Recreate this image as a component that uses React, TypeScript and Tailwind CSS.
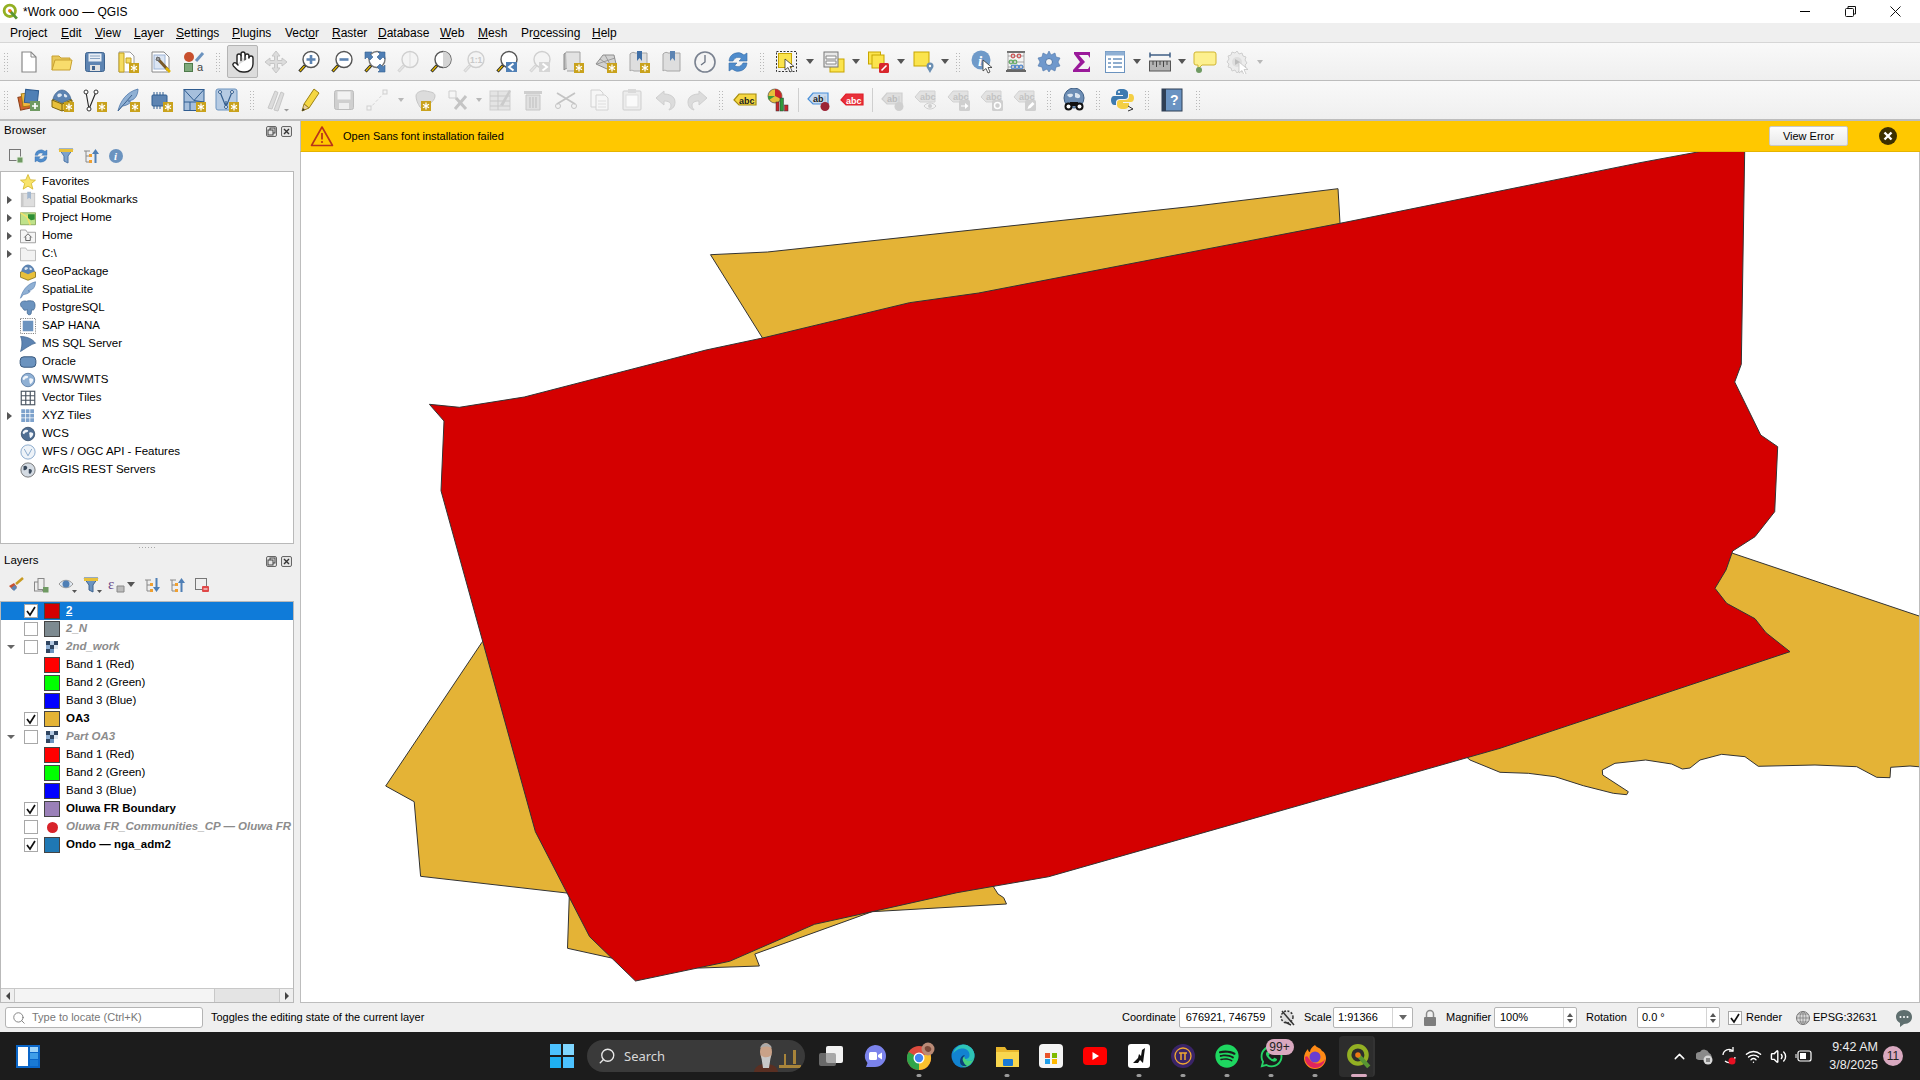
import React from "react";
import { Hand, Search, ChevronUp, Volume2, Wifi } from "lucide-react";
import { FaSpotify, FaWhatsapp } from "react-icons/fa";

const Ico = ({ children, size = 24 }: { children: React.ReactNode; size?: number }) => (
  <svg width={size} height={size} viewBox="0 0 24 24" className="shrink-0">
    {children}
  </svg>
);

const Star = ({ x = 13, y = 13 }: { x?: number; y?: number }) => (
  <g>
    <rect x={x} y={y} width="10" height="10" fill="#c9a21c" />
    <path
      d={`M${x + 5} ${y + 1.5}v7M${x + 2} ${y + 3.2}l6 3.6M${x + 8} ${y + 3.2}l-6 3.6`}
      stroke="#fff"
      strokeWidth="1.3"
    />
  </g>
);

const Mag = ({ tint = "#fff", stroke = "#555", grip = "#e0b400", children, off }: {
  tint?: string; stroke?: string; grip?: string; children?: React.ReactNode; off?: boolean;
}) => (
  <>
    <circle cx="14" cy="9.5" r="8" fill={off ? "#f4f4f4" : tint} stroke={off ? "#cfcfcf" : stroke} strokeWidth="1.4" />
    <path d="M8 15.5L2.5 21.5" stroke={off ? "#d2d2d2" : "#222"} strokeWidth="3.2" />
    <path d="M7.5 16L3 21" stroke={off ? "#e4e4e4" : grip} strokeWidth="1.4" />
    {children}
  </>
);

const Globe = ({ fill = "#8fb0d4", dark = "#4c6f99" }: { fill?: string; dark?: string }) => (
  <>
    <circle cx="12" cy="12" r="9" fill={fill} stroke={dark} strokeWidth="1" />
    <path d="M6 8c2-2 5-2 6-1s-1 3-3 3-1 3-3 2-1-3 0-4zM14 10c2-1 5 0 5 2s-2 4-3 5-2-1-2-3-1-3 0-4z" fill="#f1f5fa" />
  </>
);

const Gray = "#cfcfcf";
const GrayD = "#bdbdbd";

const NewIcon = () => <Ico><path d="M5 2h9l5 5v15H5z" fill="#fff" stroke="#888" strokeWidth="1.2" /><path d="M14 2v5h5" fill="none" stroke="#888" /></Ico>;
const OpenIcon = () => <Ico><path d="M2 20V6h7l2 2h9v3" fill="#e8c85a" stroke="#c8a030" /><path d="M2 20l3-10h17l-2 10z" fill="#f8dc6c" stroke="#c8a030" /></Ico>;
const SaveIcon = () => <Ico><rect x="2.5" y="2.5" width="19" height="19" rx="2" fill="#5d84b2" stroke="#3f648f" /><rect x="5.5" y="3.5" width="13" height="8" fill="#e8eef5" /><path d="M7 6h10M7 8.5h10" stroke="#8aa4c2" /><rect x="7" y="15" width="10" height="6" fill="#e2e2e2" /><rect x="9" y="16" width="3" height="4" fill="#3f648f" /></Ico>;
const NewLayoutIcon = () => <Ico><path d="M3 2h11l4 4v16H3z" fill="#fff" stroke="#999" /><path d="M3 3h5v19H3z" fill="#f5dc60" stroke="#c2a020" /><path d="M10 8h5v5h-5z" fill="#f5dc60" stroke="#c2a020" /><Star /></Ico>;
const LayoutMgrIcon = () => <Ico><path d="M3 2h12l5 5v15H3z" fill="#fff" stroke="#888" /><rect x="5" y="5" width="11" height="14" fill="#dbe5f3" stroke="#9db4d6" /><path d="M9 9l10 11" stroke="#7b5b2a" strokeWidth="3" /><path d="M8 7l3 1-1 3-3-1z" fill="#9a9a9a" stroke="#666" /><path d="M17 18l4 4" stroke="#e0b400" strokeWidth="2.5" /></Ico>;
const StyleIcon = () => <Ico><circle cx="7" cy="7" r="5" fill="#c8502e" /><path d="M14 11l7-8" stroke="#6b93bf" strokeWidth="3" /><rect x="2.5" y="13.5" width="8" height="8" fill="#7ea97a" stroke="#4e7a4a" /><text x="15" y="21" fontSize="11" fill="#444" fontFamily="Liberation Sans">a</text></Ico>;
const PanSelIcon = () => <Ico><path d="M12 1l4 5h-2.500v4.500H18V8l5 4-5 4v-2.500h-4.500V18H16l-4 5-4-5h2.500v-4.500H6V16l-5-4 5-4v2.500h4.500V6H8z" fill="#dcdcdc" stroke="#c6c6c6" /></Ico>;
const ZoomInIcon = () => <Ico><Mag tint="#fff"><path d="M14 5v9M9.500 9.500h9" stroke="#5d84b2" strokeWidth="2.600" /></Mag></Ico>;
const ZoomOutIcon = () => <Ico><Mag tint="#fff"><path d="M9.500 9.500h9" stroke="#5d84b2" strokeWidth="2.600" /></Mag></Ico>;
const ZoomFullIcon = () => <Ico><Mag tint="#fff" stroke="#777" /><path d="M2 2h7l-2 2 3 3-3 3-3-3-2 2zM22 2v7l-2-2-3 3-3-3 3-3-2-2zM22 22h-7l2-2-3-3 3-3 3 3 2-2z" fill="#4f7fb5" stroke="#345e8e" strokeWidth=".6" /></Ico>;
const ZoomSelIcon = () => <Ico><Mag off><path d="M14 2v15" stroke="#ddd" /></Mag></Ico>;
const ZoomLayerIcon = () => <Ico><Mag tint="#fff" stroke="#555"><path d="M14 1.500v16a8 8 0 0 0 0-16z" fill="#d4d4d4" /></Mag></Ico>;
const ZoomNativeIcon = () => <Ico><Mag off><text x="8" y="13" fontSize="8.500" fontWeight="700" fill="#c9c9c9" fontFamily="Liberation Sans">1:1</text></Mag></Ico>;
const ZoomLastIcon = () => <Ico><Mag tint="#fff" stroke="#555" /><rect x="11" y="12" width="11" height="10" fill="#4f7fb5" /><path d="M18.500 13.500L14 17l4.500 3.500" stroke="#fff" strokeWidth="2" fill="none" /></Ico>;
const ZoomNextIcon = () => <Ico><Mag off /><rect x="11" y="12" width="11" height="10" fill="#d6d6d6" /><path d="M14.500 13.500L19 17l-4.500 3.500" stroke="#fff" strokeWidth="2" fill="none" /></Ico>;
const NewMapIcon = () => <Ico><path d="M3 4c2-2 5-2 5 0v16c0-2-3-2-5 0z" fill="#bbb" stroke="#888" /><path d="M5 2h14v19H6" fill="#e2e2e2" stroke="#a2a2a2" /><Star /></Ico>;
const New3dIcon = () => <Ico><path d="M2 14L9 5h11l2 9-9 5z" fill="#d2d2d2" stroke="#8e8e8e" /><path d="M6 9l10 7M11 5l6 11M3 14l18-6" stroke="#8e8e8e" strokeWidth=".8" /><Star /></Ico>;
const BookmarkIcon = ({ off, star }: { off?: boolean; star?: boolean }) => <Ico><path d="M3 4c2-2 4-2 5-1h12v18H7c-2-1-3-1-4 0z" fill={off ? "#e8e8e8" : "#dedede"} stroke="#a6a6a6" /><path d="M10 1h5v10l-2.500-3-2.500 3z" fill={star ? "#3f6fa6" : "#5d84b2"} />{star && <Star />}</Ico>;
const ClockIcon = () => <Ico><circle cx="12" cy="12" r="10" fill="#f4f4f4" stroke="#7a8290" strokeWidth="1.600" /><path d="M12 5v7l-4 3" stroke="#6a7280" strokeWidth="1.300" fill="none" /></Ico>;
const RefreshIcon = ({ size = 24 }: { size?: number }) => <Ico size={size}><path d="M3 11a9 9 0 0 1 15-6l3-2v8h-8l2.500-2.500A5.500 5.500 0 0 0 7 11z" fill="#4f8ccc" stroke="#386da6" strokeWidth=".6" /><path d="M21 13a9 9 0 0 1-15 6l-3 2v-8h8l-2.500 2.500A5.500 5.500 0 0 0 17 13z" fill="#4f8ccc" stroke="#386da6" strokeWidth=".6" /></Ico>;
const Pointer = ({ x = 10, y = 9 }: { x?: number; y?: number }) => <path transform={`translate(${x} ${y})`} d="M0 0l0 11 3-2.500 2 4.500 2-1-2-4.500h4z" fill="#fff" stroke="#333" strokeWidth=".8" />;
const SelectIcon = () => <Ico><rect x="1.500" y="1.500" width="20" height="20" fill="none" stroke="#333" strokeDasharray="2 1.500" /><rect x="3.500" y="3.500" width="13" height="14" fill="#fbe44d" stroke="#c8a500" /><Pointer /></Ico>;
const SelFormIcon = () => <Ico><rect x="8" y="9" width="14" height="13" fill="#fbe44d" stroke="#c8a500" /><rect x="2" y="2" width="14" height="15" fill="#e8e8e8" stroke="#777" /><path d="M4 6h10v3H4zM4 11h10v3H4z" fill="#fff" stroke="#888" /></Ico>;
const DeselIcon = () => <Ico><rect x="1.500" y="2" width="12" height="12" fill="#fbe44d" stroke="#c8a500" /><rect x="5" y="5" width="12" height="13" fill="#fbe44d" stroke="#c8a500" /><rect x="12" y="13" width="10" height="10" rx="1.500" fill="#d8262c" /><path d="M14.500 20.500l5-5" stroke="#fff" strokeWidth="1.600" /></Ico>;
const SelLocIcon = () => <Ico><rect x="2" y="2" width="15" height="14" fill="#fbe44d" stroke="#c8a500" /><path d="M18 23c-2-4-3.500-5-3.500-7a3.500 3.500 0 0 1 7 0c0 2-1.500 3-3.500 7z" fill="#6b8fb3" /><circle cx="18" cy="16" r="1.200" fill="#fff" /></Ico>;
const IdentifyIcon = () => <Ico><circle cx="10" cy="10" r="9.500" fill="#6f9ac9" /><text x="7" y="16" fontSize="15" fontStyle="italic" fontWeight="700" fill="#fff" fontFamily="Liberation Serif">i</text><Pointer x={12} y={10} /></Ico>;
const AbacusIcon = () => <Ico><path d="M3 2h18M3 20h18" stroke="#444" strokeWidth="1.600" /><rect x="2" y="20" width="20" height="2" fill="#666" /><path d="M4 2v18M20 2v18M4 6h16M4 12h16M4 17h16" stroke="#888" strokeWidth=".7" /><g fill="none" strokeWidth="1.200"><circle cx="9" cy="6" r="1.800" stroke="#c55" /><circle cx="15" cy="6" r="1.800" stroke="#c55" /><circle cx="7" cy="12" r="1.800" stroke="#6a6" /><circle cx="11" cy="12" r="1.800" stroke="#6a6" /><circle cx="9" cy="17" r="1.800" stroke="#58c" /><circle cx="13" cy="17" r="1.800" stroke="#58c" /><circle cx="17" cy="17" r="1.800" stroke="#58c" /></g></Ico>;
const GearIcon = () => <Ico><path d="M12 1l2 4 4-2 1 4 4 1-2 4 2 4-4 1-1 4-4-2-2 3-2-3-4 2-1-4-4-1 2-4-2-4 4-1 1-4 4 2z" fill="#6f98cc" stroke="#4d76a9" strokeWidth=".6" /><circle cx="12" cy="12" r="3.500" fill="#f2f2f2" stroke="#4d76a9" /></Ico>;
const SigmaIcon = () => <Ico><path d="M4 2h16v6l-2-3H9l6 7-7 7h10l2-3v6H3v-2l7-8-6-8z" fill="#9a1a9a" /></Ico>;
const TableIcon = () => <Ico><rect x="2.500" y="1.500" width="19" height="21" fill="#fff" stroke="#6b93bf" /><rect x="2.500" y="1.500" width="19" height="4" fill="#8fb0d4" /><path d="M5 9h3M10 9h9M5 13h3M10 13h9M5 17h3M10 17h9" stroke="#6b93bf" strokeWidth="1.500" /></Ico>;
const MeasureIcon = () => <Ico><path d="M2 5h20M2 2.500v5M22 2.500v5" stroke="#3f5f85" strokeWidth="1.500" /><rect x="1.500" y="11" width="21" height="10" fill="#b4b4b4" stroke="#555" /><path d="M5 11v4M8.500 11v6M12 11v4M15.500 11v6M19 11v4" stroke="#444" /></Ico>;
const TipIcon = () => <Ico><path d="M3 2h18a2 2 0 0 1 2 2v9a2 2 0 0 1-2 2H9l-4 4v-4H3a2 2 0 0 1-2-2V4a2 2 0 0 1 2-2z" fill="#fdf08e" stroke="#d0b530" /><circle cx="6" cy="20" r="3" fill="#6f9a62" /></Ico>;
const GearOffIcon = () => <Ico><path d="M11 1l2 3 3-1 1 3 3 1-1 3 2 3-2 2 1 3-3 1-1 3-3-1-2 2-2-3-3 1-1-3-3-1 1-3-2-2 2-3-1-3 3-1 1-3 3 1z" fill="#ececec" stroke="#cfcfcf" /><circle cx="11" cy="12" r="5" fill="#dedede" /><path d="M9 9l5 3-5 3z" fill="#bcbcbc" /><path transform="translate(13 12)" d="M0 0l0 11 3-2.500 2 4.500 2-1-2-4.500h4z" fill="#fff" stroke="#c4c4c4" strokeWidth=".8" /></Ico>;

const DsMgrIcon = () => <Ico><rect x="2" y="8" width="12" height="13" transform="rotate(-12 8 14)" fill="#d2632d" stroke="#8a3f17" /><rect x="5" y="5" width="12" height="13" transform="rotate(-8 11 11)" fill="#f0b840" stroke="#a67a10" /><rect x="8" y="2" width="13" height="13" transform="rotate(6 14 8)" fill="#4f7fb5" stroke="#2f5c90" /><rect x="13" y="13" width="10" height="10" fill="#6f9a62" /><path d="M18 15v6M15 18h6" stroke="#fff" strokeWidth="1.700" /></Ico>;
const GpkgIcon = () => <Ico><path d="M12 9l10 3v7l-10 4-10-4v-7z" fill="#e8c03a" stroke="#7a6510" /><path d="M2 12l10 4 10-4M12 16v7" fill="none" stroke="#7a6510" /><path d="M3 11c1-5 5-9 9-9s8 4 9 9l-9 4z" fill="#5d84b2" stroke="#375d88" strokeWidth=".6" /><path d="M8 6c2-1 4 0 4 1s-3 3-4 2-1-2 0-3zM14 6c2 0 4 2 3 3s-3 0-3-1z" fill="#dfe8f2" /><Star x={14} y={14} /></Ico>;
const TopoIcon = () => <Ico><path d="M3 4l3 17M13 4L6 21" stroke="#222" strokeWidth="1.100" fill="none" /><circle cx="3" cy="4" r="2" fill="#fff" stroke="#333" /><circle cx="13" cy="4" r="2" fill="#fff" stroke="#333" /><circle cx="6" cy="21" r="2" fill="#fff" stroke="#333" /><Star x={14} y={14} /></Ico>;
const FeatherIcon = () => <Ico><path d="M2 23C4 14 10 4 22 1c0 6-3 10-6 11l-4 1 3 1c-3 3-7 4-9 4z" fill="#8fb0d4" stroke="#4d76a9" strokeWidth=".8" /><path d="M2 23L16 7" stroke="#3f648f" /><Star x={14} y={14} /></Ico>;
const ChipIcon = () => <Ico><rect x="3" y="7" width="15" height="11" rx="1" fill="#5d84b2" stroke="#2f5c90" /><path d="M5 4v3M8 4v3M11 4v3M14 4v3M5 18v3M8 18v3M11 18v3" stroke="#2f5c90" /><Star x={14} y={14} /></Ico>;
const MeshIcon = () => <Ico><rect x="2" y="1.500" width="20" height="21" fill="#a6bfdc" stroke="#2f5c90" /><path d="M2 14h20M8 14v8.500M2 1.500l10 11 10-11M12 12.500l10 1.500" stroke="#2f5c90" fill="none" /><Star x={14} y={14} /></Ico>;
const VmeshIcon = () => <Ico><rect x="1" y="1" width="21" height="21" rx="2" fill="#b6cbe3" stroke="#6b93bf" /><path d="M5 4l6 15 6-15M11 19V13" fill="none" stroke="#345e8e" strokeWidth="1.200" /><circle cx="5" cy="4" r="1.500" fill="#fff" stroke="#345e8e" /><circle cx="17" cy="4" r="1.500" fill="#fff" stroke="#345e8e" /><circle cx="11" cy="19" r="1.500" fill="#fff" stroke="#345e8e" /><Star x={14} y={14} /></Ico>;
const PencilsOff = () => <Ico><path d="M2 20L9 3l3 1.500L6 21zM8 22L15 4l3 1.500L12 23z" fill="#dcdcdc" stroke="#c6c6c6" /><path d="M18 21h5l-2.500 2.500z" fill="#9a9a9a" /></Ico>;
const PencilIcon = () => <Ico><path d="M5 16L15 1l5 4L10 20z" fill="#f5d742" stroke="#9b8113" /><path d="M5 16l-2 7 7-3z" fill="#e8cfa0" stroke="#9b8113" /><path d="M3 23l1-3 2 2z" fill="#333" /></Ico>;
const SaveOff = () => <Ico><rect x="2.500" y="2.500" width="19" height="19" rx="2" fill={Gray} stroke={GrayD} /><rect x="5.500" y="3.500" width="13" height="8" fill="#f2f2f2" /><rect x="7" y="15" width="10" height="6" fill="#eee" /></Ico>;
const NodeOff = () => <Ico><path d="M4 21L20 4" stroke="#d4d4d4" strokeDasharray="3 2" /><rect x="2" y="18" width="4" height="4" fill="#f4f4f4" stroke="#cfcfcf" /><rect x="18" y="2" width="4" height="4" fill="#f4f4f4" stroke="#cfcfcf" /></Ico>;
const BlobOff = () => <Ico><path d="M3 8c0-4 6-6 10-5s9 1 9 5-3 5-5 8-8 6-10 3-4-7-4-11z" fill="#dcdcdc" stroke="#c6c6c6" /><Star x={8} y={13} /></Ico>;
const ToolsOff = () => <Ico><path d="M3 3h7v7H3z" fill="none" stroke="#cdcdcd" /><path d="M10 10l10 11M20 8L9 21" stroke="#c4c4c4" strokeWidth="3" /></Ico>;
const RowsOff = () => <Ico><rect x="2" y="3" width="20" height="19" fill="#e4e4e4" stroke="#cfcfcf" /><path d="M2 8h20M2 13h20M2 18h20M10 3v19" stroke="#c8c8c8" /><path d="M12 17L21 2l2 1-8 15z" fill="#cbcbcb" /></Ico>;
const TrashOff = () => <Ico><rect x="3" y="3" width="18" height="3" fill="#cfcfcf" /><path d="M5 7h14v15H5z" fill="#e0e0e0" stroke="#c6c6c6" /><path d="M9 9v11M12 9v11M15 9v11" stroke="#bdbdbd" /></Ico>;
const CutOff = () => <Ico><path d="M3 5l18 11M21 5L3 16" stroke="#c4c4c4" strokeWidth="1.800" /><circle cx="4" cy="18" r="2.500" fill="none" stroke="#c4c4c4" /><circle cx="20" cy="18" r="2.500" fill="none" stroke="#c4c4c4" /></Ico>;
const CopyOff = () => <Ico><path d="M4 2h9l3 3v14H4z" fill="#f6f6f6" stroke="#d2d2d2" /><path d="M9 7h9l3 3v12H9z" fill="#f6f6f6" stroke="#d2d2d2" /><path d="M11 13h8M11 16h8M11 19h8" stroke="#dedede" /></Ico>;
const PasteOff = () => <Ico><rect x="3" y="3" width="18" height="19" rx="1" fill="#ececec" stroke="#cdcdcd" /><rect x="8" y="1" width="8" height="4" fill="#dadada" /><rect x="6" y="7" width="12" height="12" fill="#fafafa" stroke="#dedede" /></Ico>;
const UndoOff = ({ flip }: { flip?: boolean }) => <Ico><path transform={flip ? "matrix(-1 0 0 1 24 0)" : undefined} d="M11 3L3 10l8 7v-4c4 0 7 1 7 5 0 2-2 3-2 4 4-1 6-4 6-8 0-6-6-8-11-8z" fill="#dcdcdc" stroke="#cfcfcf" /></Ico>;
const AbcTag = ({ color, line, bg }: { color: string; line: string; bg: string }) => (
  <Ico>
    <path d="M1 12l5-6h17v11H6z" fill={color} stroke={line} strokeWidth="1.200" />
    <text x="6" y="15.500" fontSize="9" fontWeight="700" fill={bg} fontFamily="Liberation Sans">abc</text>
  </Ico>
);
const DiagramIcon = () => <Ico><circle cx="9" cy="8" r="7" fill="#e8c03a" stroke="#333" strokeWidth=".6" /><path d="M9 8V1a7 7 0 0 1 6 10z" fill="#c8262c" /><path d="M9 8L3 12a7 7 0 0 1-1-4z" fill="#3d9a3d" /><rect x="10" y="14" width="3" height="9" fill="#c8262c" stroke="#333" strokeWidth=".5" /><rect x="14" y="10" width="3.500" height="13" fill="#2f9a3a" stroke="#333" strokeWidth=".5" /><rect x="18.500" y="17" width="3.500" height="6" fill="#c8262c" stroke="#333" strokeWidth=".5" /></Ico>;
const PinTag = ({ off }: { off?: boolean }) => (
  <Ico>
    <path d="M1 11l5-6h15v11H6z" fill={off ? "#dedede" : "#c8daef"} stroke={off ? "#cfcfcf" : "#4a90d9"} strokeWidth="1.200" />
    <text x="6" y="14" fontSize="9" fontWeight="700" fill={off ? "#bbb" : "#222"} fontFamily="Liberation Sans">ab</text>
    <path d="M18 8v8" stroke={off ? "#ccc" : "#bbb"} />
    <circle cx="18" cy="18.500" r="4.500" fill={off ? "#cfcfcf" : "#9b2335"} />
  </Ico>
);
const OffTag = ({ kind }: { kind: number }) => (
  <Ico>
    <path d="M1 9l5-6h15v11H6z" fill="#e2e2e2" stroke="#d2d2d2" />
    <text x="6" y="12" fontSize="9" fontWeight="700" fill="#c2c2c2" fontFamily="Liberation Sans">abc</text>
    {kind === 0 && <path d="M10 18c3-4 9-4 12 0-3 4-9 4-12 0z" fill="#f2f2f2" stroke="#cfcfcf" />}
    {kind === 0 && <circle cx="16" cy="18" r="2" fill="#cfcfcf" />}
    {kind > 0 && <rect x="12" y="12" width="11" height="11" rx="1.500" fill="#cfcfcf" />}
    {kind === 1 && <path d="M14 17.500h4v-2.500l3.500 3-3.500 3v-2.500h-4z" fill="#fff" />}
    {kind === 2 && <circle cx="17.500" cy="17.500" r="3" fill="none" stroke="#fff" strokeWidth="1.500" />}
    {kind === 3 && <path d="M14.500 21l1-3 4-4 2 2-4 4z" fill="#fff" />}
  </Ico>
);
const BinocIcon = () => <Ico><circle cx="12" cy="10" r="10" fill="#6d8eb5" stroke="#3f5f85" /><path d="M5 7c3-2 6-1 6 0s-2 3-4 2zM13 5c3 0 6 2 5 4s-4 1-5 0z" fill="#dbe5f0" /><circle cx="6.500" cy="18.500" r="4" fill="#111" /><circle cx="17.500" cy="18.500" r="4" fill="#111" /><rect x="8" y="14" width="8" height="4" fill="#111" /><circle cx="6.500" cy="18.500" r="2" fill="#fff" /><circle cx="17.500" cy="18.500" r="2" fill="#fff" /></Ico>;
const PythonIcon = () => <Ico><path d="M11 1c-5 0-6 2-6 4v2h7v1H3c-2 0-3 2-3 4s1 5 3 5h2v-3c0-2 2-3 4-3h5c2 0 3-1 3-3V5c0-2-2-4-6-4z" fill="#3d7ab0" /><circle cx="8" cy="4" r="1" fill="#fff" /><path d="M12 21c5 0 6-2 6-4v-2h-6v-1h8c2 0 3-2 3-4s-1-4-3-4h-2v3c0 2-2 3-4 3H9c-2 0-3 1-3 3v2c0 2 2 4 6 4z" fill="#f4cf45" /><path d="M17 18l5 3-5 2" fill="none" stroke="#333" /></Ico>;
const HelpIcon = () => <Ico><rect x="2" y="1" width="20" height="22" fill="#6a93c2" stroke="#2f3f55" /><rect x="2" y="1" width="4" height="22" fill="#2f3f55" /><text x="10" y="17" fontSize="14" fontWeight="700" fill="#fff" fontFamily="Liberation Sans">?</text></Ico>;

const Handle = ({ w }: { w: string }) => (
  <div className={`${w} h-[24px] flex items-center justify-center shrink-0`}>
    <svg width="5" height="20" viewBox="0 0 5 20">
      {[1, 4, 7, 10, 13, 16, 19].map((y) => (
        <g key={y} fill="#b8b8b8">
          <rect x="0" y={y} width="1" height="1" />
          <rect x="3" y={y} width="1" height="1" />
        </g>
      ))}
    </svg>
  </div>
);

const Cell = ({ children, active }: { children: React.ReactNode; active?: boolean }) => (
  <div className="w-[33px] h-[33px] flex items-center justify-center shrink-0">
    <div className={active ? "w-[31px] h-[33px] flex items-center justify-center rounded-[2px] border border-[#b4b4b4] bg-[#dcdcdc]" : "flex items-center justify-center"}>
      {children}
    </div>
  </div>
);

const Drop = ({ w, off }: { w: string; off?: boolean }) => (
  <div className={`${w} flex justify-center shrink-0`}>
    <div className={off ? "w-0 h-0 border-x-[3px] border-x-transparent border-t-[4px] border-t-[#b8b8b8]" : "w-0 h-0 border-x-[4px] border-x-transparent border-t-[5px] border-t-[#555]"} />
  </div>
);

const Sep = () => (
  <div className="w-[8px] h-[24px] flex justify-center shrink-0">
    <div className="w-px h-full bg-[#cfcfcf]" />
  </div>
);

const menus: [string, string, string][] = [
  ["", "", "Project"], ["", "E", "dit"], ["", "V", "iew"], ["", "L", "ayer"], ["", "S", "ettings"], ["", "P", "lugins"],
  ["Vect", "o", "r"], ["", "R", "aster"], ["", "D", "atabase"], ["", "W", "eb"], ["", "M", "esh"], ["Pr", "o", "cessing"], ["", "H", "elp"],
];

function GpkgIconInner() {
  return (
    <g>
      <path d="M12 9l10 3v7l-10 4-10-4v-7z" fill="#e8c03a" stroke="#7a6510" />
      <path d="M3 11c1-5 5-9 9-9s8 4 9 9l-9 4z" fill="#5d84b2" />
      <path d="M8 6c2-1 4 0 4 1s-3 3-4 2-1-2 0-3zM14 6c2 0 4 2 3 3s-3 0-3-1z" fill="#dfe8f2" />
    </g>
  );
}

const browserItems: [string, boolean, React.ReactNode][] = [
  ["Favorites", false, <path key="a" d="M12 2l3 7 7 .5-5.500 4.500 2 7.500L12 17.500 5.500 21.500l2-7.500L2 9.500 9 9z" fill="#f8e36a" stroke="#d0b020" />],
  ["Spatial Bookmarks", true, <g key="a"><rect x="3" y="3" width="18" height="18" fill="#dedede" stroke="#bbb" /><path d="M3 3h3v18H3z" fill="#c8c8c8" /><path d="M11 1h5v10l-2.500-2-2.500 2z" fill="#a3b8d0" /></g>],
  ["Project Home", true, <g key="a"><path d="M2 5h20v16H2z" fill="#bfe28a" stroke="#7a9a4a" /><path d="M2 5l9 6 4 10" stroke="#f5e06a" strokeWidth="2" fill="none" /><path d="M12 7h9v7l-5 1-4-3z" fill="#2e8f35" /></g>],
  ["Home", true, <g key="a"><path d="M2 21V4h7l2 3h11v14z" fill="#f5f5f5" stroke="#888" /><path d="M7 14l5-5 5 5M9 13v5h6v-5" fill="none" stroke="#333" /></g>],
  ["C:\\", true, <path key="a" d="M2 21V4h7l2 3h11v14z" fill="#f2f2f2" stroke="#aaa" />],
  ["GeoPackage", false, <GpkgIconInner key="a" />],
  ["SpatiaLite", false, <path key="a" d="M2 23C4 14 10 4 22 1c0 6-3 10-6 11l-4 1 3 1c-3 3-7 4-9 4z" fill="#8fb0d4" stroke="#4d76a9" strokeWidth=".8" />],
  ["PostgreSQL", false, <path key="a" d="M2 7c0-4 5-5 8-4 2-1 6-1 9 0 3 2 3 8 1 11-1 1-2 1-3 0l-1 6c-2 2-4 1-5-1v-5c-3 2-5 1-6-2-2-1-3-3-3-5z" fill="#6b93bf" stroke="#3f648f" />],
  ["SAP HANA", false, <g key="a"><rect x="2" y="2" width="20" height="20" fill="none" stroke="#555" strokeDasharray="1.500 1.500" /><rect x="5" y="5" width="14" height="14" fill="#6b93bf" /></g>],
  ["MS SQL Server", false, <path key="a" d="M2 2c8 0 16 3 20 9-5 1-9 4-20 11 2-5 3-15 0-20z" fill="#5d84b2" stroke="#3f648f" />],
  ["Oracle", false, <rect key="a" x="1.500" y="5" width="21" height="14" rx="5" fill="#6b93bf" stroke="#2f4f75" strokeWidth="1.200" />],
  ["WMS/WMTS", false, <g key="a"><Globe /></g>],
  ["Vector Tiles", false, <g key="a"><rect x="3" y="3" width="18" height="18" fill="#fff" stroke="#47525e" strokeWidth="1.500" /><path d="M9 3v18M15 3v18M3 9h18M3 15h18" stroke="#47525e" strokeWidth="1.500" /></g>],
  ["XYZ Tiles", true, <g key="a" fill="#7ea2cc">{[3, 9, 15].flatMap((x) => [3, 9, 15].map((y) => <rect key={`${x}-${y}`} x={x} y={y} width="5" height="5" />))}</g>],
  ["WCS", false, <g key="a"><Globe fill="#4f6e93" dark="#2f4561" /></g>],
  ["WFS / OGC API - Features", false, <g key="a"><circle cx="12" cy="12" r="9.500" fill="#eef3f8" stroke="#6b93bf" /><path d="M7 8l5 9 5-9" fill="none" stroke="#6b93bf" /></g>],
  ["ArcGIS REST Servers", false, <g key="a"><circle cx="12" cy="12" r="9.500" fill="#d4dbe3" stroke="#555" /><path d="M6 7c3-2 5 0 5 2s-3 4-5 3zM13 11c2-1 5 0 4 3s-3 4-4 2z" fill="#3a4a5c" /></g>],
];

const TreeArrow = () => (
  <div className="w-0 h-0 border-y-[4px] border-y-transparent border-l-[5px] border-l-[#555]" />
);

const BrowserRow = ({ label, arrow, icon }: { label: string; arrow: boolean; icon: React.ReactNode }) => (
  <div className="h-[18px] flex items-center">
    <div className="w-[18px] pl-[6px] flex shrink-0">{arrow && <TreeArrow />}</div>
    <svg width="18" height="18" viewBox="0 0 24 24" className="shrink-0">{icon}</svg>
    <span className="ml-[5px] text-black whitespace-nowrap">{label}</span>
  </div>
);

const RasterIcon = () => (
  <svg width="16" height="16" viewBox="0 0 16 16">
    <rect x="2" y="2" width="4" height="4" fill="#2f4561" />
    <rect x="6" y="2" width="4" height="4" fill="#b6cbe3" />
    <rect x="10" y="2" width="4" height="4" fill="#2f4561" />
    <rect x="2" y="6" width="4" height="4" fill="#8fb0d4" />
    <rect x="6" y="6" width="4" height="4" fill="#2f4561" />
    <rect x="10" y="6" width="4" height="4" fill="#dde6f0" />
    <rect x="2" y="10" width="4" height="4" fill="#2f4561" />
    <rect x="6" y="10" width="4" height="4" fill="#6b93bf" />
  </svg>
);

type Layer = {
  label: string; check?: boolean; checked?: boolean; swatch?: string; raster?: boolean; dot?: boolean;
  expand?: boolean; style?: string; band?: boolean; selected?: boolean;
};

const layers: Layer[] = [
  { label: "2", check: true, checked: true, swatch: "#d40000", selected: true, style: "font-bold text-white underline" },
  { label: "2_N", check: true, swatch: "#7d8a90", style: "font-bold italic text-[#8c8c8c]" },
  { label: "2nd_work", check: true, raster: true, expand: true, style: "font-bold italic text-[#8c8c8c]" },
  { label: "Band 1 (Red)", swatch: "#ff0000", band: true, style: "text-black" },
  { label: "Band 2 (Green)", swatch: "#00ff00", band: true, style: "text-black" },
  { label: "Band 3 (Blue)", swatch: "#0000ff", band: true, style: "text-black" },
  { label: "OA3", check: true, checked: true, swatch: "#e4b336", style: "font-bold text-black" },
  { label: "Part OA3", check: true, raster: true, expand: true, style: "font-bold italic text-[#8c8c8c]" },
  { label: "Band 1 (Red)", swatch: "#ff0000", band: true, style: "text-black" },
  { label: "Band 2 (Green)", swatch: "#00ff00", band: true, style: "text-black" },
  { label: "Band 3 (Blue)", swatch: "#0000ff", band: true, style: "text-black" },
  { label: "Oluwa FR Boundary", check: true, checked: true, swatch: "#9a80b8", style: "font-bold text-black" },
  { label: "Oluwa FR_Communities_CP — Oluwa FR", check: true, dot: true, style: "font-bold italic text-[#8c8c8c]" },
  { label: "Ondo — nga_adm2", check: true, checked: true, swatch: "#1f78b4", style: "font-bold text-black" },
];

const CheckBox = ({ checked }: { checked?: boolean }) => (
  <div className="w-[14px] h-[14px] border border-[#a8a8a8] bg-white flex items-center justify-center shrink-0">
    {checked && (
      <svg width="12" height="12" viewBox="0 0 12 12">
        <path d="M2 6l3 4 5-8" fill="none" stroke="#111" strokeWidth="1.700" />
      </svg>
    )}
  </div>
);

const LayerRow = ({ layer }: { layer: Layer }) => (
  <div className={layer.selected ? "h-[18px] flex items-center bg-[#0f7bd9]" : "h-[18px] flex items-center"}>
    <div className="w-[23px] pl-[6px] shrink-0">
      {layer.expand && <div className="w-0 h-0 border-x-[4px] border-x-transparent border-t-[4px] border-t-[#666]" />}
    </div>
    <div className="w-[20px] shrink-0">{layer.check && <CheckBox checked={layer.checked} />}</div>
    <div className="w-[16px] h-[16px] flex items-center justify-center shrink-0">
      {layer.swatch && <div className="w-[16px] h-[16px] border border-[#444]" style={{ background: layer.swatch }} />}
      {layer.raster && <RasterIcon />}
      {layer.dot && <div className="w-[11px] h-[11px] rounded-full bg-[#d8232a]" />}
    </div>
    <span className={`ml-[6px] whitespace-nowrap ${layer.style}`}>{layer.label}</span>
  </div>
);

const DockHeader = ({ title }: { title: string }) => (
  <div className="h-[20px] flex items-center pl-[4px] pr-[2px]">
    <span className="text-[11.5px] text-black">{title}</span>
    <div className="ml-auto flex gap-[4px]">
      <svg width="11" height="11" viewBox="0 0 11 11"><rect x=".5" y=".5" width="10" height="10" rx="1.500" fill="#e4e4e4" stroke="#666" /><rect x="4" y="2" width="5" height="5" fill="none" stroke="#444" /><rect x="2" y="4" width="5" height="5" fill="#e4e4e4" stroke="#444" /></svg>
      <svg width="11" height="11" viewBox="0 0 11 11"><rect x=".5" y=".5" width="10" height="10" rx="1.500" fill="#e4e4e4" stroke="#666" /><path d="M3 3l5 5M8 3l-5 5" stroke="#333" strokeWidth="1.400" /></svg>
    </div>
  </div>
);

const Spin = () => (
  <div className="ml-auto w-[13px] h-full border-l border-[#d4d4d4] flex flex-col items-center justify-center gap-[2px] shrink-0">
    <div className="w-0 h-0 border-x-[3px] border-x-transparent border-b-[4px] border-b-[#555]" />
    <div className="w-0 h-0 border-x-[3px] border-x-transparent border-t-[4px] border-t-[#555]" />
  </div>
);

const fieldClass = "h-[21px] bg-white border border-[#b4b4b4] rounded-[2px] flex items-center text-black shrink-0";

const redShape =
  "429.4,404.3 459.4,407.3 524.3,397 706,350 762.5,338 909.5,302.7 978.7,293 1340,223.3 1360,219.3 1640,162.7 1703,151 1744.7,151 1741.3,364.3 1734.7,382 1760.7,435 1777.7,446.7 1774.7,511.7 1755,536.7 1732.7,551 1726,570 1715,588.3 1726.7,603.3 1755,618.7 1766,632.7 1790,651.7 1500,748.3 1048.7,876.7 956.9,892.7 872,911.7 814.5,924.3 729.6,961.3 635.5,981 589.6,936.7 535.4,831.7 441,490.7 444,421";
const yellowShape =
  "710.5,254.7 767.4,252 1196,206 1338,188.7 1340,223 1500,400 1732.7,553.3 1922,617 1922,767 1910,766 1890.7,767.3 1890,777.7 1876.7,777.3 1856.7,766.7 1815,765 1758.3,766.3 1745,756.7 1721.7,754.3 1700,760 1690,768 1682.3,769 1671.7,764 1645.7,760 1615,763.3 1602.3,770 1602.7,775 1628.3,791.7 1626.7,794.7 1613.3,793.3 1583.3,785.7 1555,776.7 1528.3,773.3 1500,772.3 1470,760 1400,700 1040,800 993.6,887 998,894 1003.7,897.7 1006.5,904 872,911.7 754.8,954 759.4,966 699.8,968 611.6,958 567.5,948.3 569.4,893.3 420.6,876.3 414.2,801.7 385.7,786 481.7,642.7 762.5,338";

const TaskDot = () => <div className="absolute bottom-[3px] left-1/2 -translate-x-1/2 w-[5px] h-[3px] rounded-full bg-[#9a9a9a]" />;

const TaskCell = ({ children, dot, active }: { children: React.ReactNode; dot?: boolean; active?: boolean }) => (
  <div className="relative w-[44px] h-[48px] flex items-center justify-center shrink-0">
    {active && <div className="absolute left-[2px] top-[4px] bottom-[3px] w-[36px] rounded-[4px] bg-[#2d2d2d] border-r-[2px] border-[#333]" />}
    <div className="relative flex items-center justify-center">{children}</div>
    {dot && <TaskDot />}
    {active && <div className="absolute bottom-[3px] left-1/2 -translate-x-1/2 w-[16px] h-[3px] rounded-full bg-[#d9a9c0]" />}
  </div>
);

const QgisLogo = ({ size }: { size: number }) => (
  <svg width={size} height={size} viewBox="0 0 24 24">
    <circle cx="11" cy="11" r="8" fill="none" stroke="#93b023" strokeWidth="4" />
    <path d="M11 11l10 11" stroke="#589632" strokeWidth="4" />
    <circle cx="11" cy="11" r="2.500" fill="#ee7913" />
  </svg>
);

export default function App() {
  return (
    <div className="w-[1920px] h-[1080px] overflow-hidden flex flex-col bg-[#efefef] text-[11.5px] leading-none font-['Liberation_Sans',sans-serif]">
      {/* title */}
      <div className="h-[23px] bg-white flex items-center shrink-0 text-[12px]">
        <div className="ml-[2px] w-[21px]"><QgisLogo size={17} /></div>
        <span className="text-black">*Work ooo — QGIS</span>
        <div className="ml-auto flex items-center">
          <div className="w-[46px] flex justify-center"><div className="w-[10px] h-px bg-black" /></div>
          <div className="w-[44px] flex justify-center">
            <svg width="11" height="11" viewBox="0 0 11 11"><rect x=".5" y="2.500" width="8" height="8" rx="1" fill="none" stroke="#111" /><path d="M3 2V.5h7.500V8H9" fill="none" stroke="#111" /></svg>
          </div>
          <div className="w-[46px] mr-[2px] flex justify-center">
            <svg width="11" height="11" viewBox="0 0 11 11"><path d="M.5.5l10 10M10.500.5l-10 10" stroke="#111" /></svg>
          </div>
        </div>
      </div>

      {/* menu */}
      <div className="h-[20px] pl-[10px] shrink-0 border-b border-[#d6d6d6] grid grid-cols-[51px_34px_39px_42px_56px_53px_47px_46px_62px_38px_43px_71px_40px] items-center justify-start text-black text-[12px]">
        {menus.map(([a, u, b]) => (
          <span key={a + u + b}>{a}<span className="underline">{u}</span>{b}</span>
        ))}
      </div>

      {/* toolbar 1 */}
      <div className="h-[38px] shrink-0 flex items-center bg-linear-to-b from-[#f9f9f9] to-[#efefef] border-b border-[#bdbdbd]">
        <Handle w="w-[12px]" />
        <Cell><NewIcon /></Cell><Cell><OpenIcon /></Cell><Cell><SaveIcon /></Cell><Cell><NewLayoutIcon /></Cell><Cell><LayoutMgrIcon /></Cell><Cell><StyleIcon /></Cell>
        <Handle w="w-[16px]" />
        <Cell active><Hand size={24} strokeWidth={1.4} color="#222" fill="#fff" /></Cell>
        <Cell><PanSelIcon /></Cell><Cell><ZoomInIcon /></Cell><Cell><ZoomOutIcon /></Cell><Cell><ZoomFullIcon /></Cell><Cell><ZoomSelIcon /></Cell><Cell><ZoomLayerIcon /></Cell><Cell><ZoomNativeIcon /></Cell><Cell><ZoomLastIcon /></Cell><Cell><ZoomNextIcon /></Cell>
        <Cell><NewMapIcon /></Cell><Cell><New3dIcon /></Cell><Cell><BookmarkIcon star /></Cell><Cell><BookmarkIcon /></Cell><Cell><ClockIcon /></Cell><Cell><RefreshIcon /></Cell>
        <Handle w="w-[16px]" />
        <Cell><SelectIcon /></Cell><Drop w="w-[14px]" />
        <Cell><SelFormIcon /></Cell><Drop w="w-[12px]" />
        <Cell><DeselIcon /></Cell><Drop w="w-[12px]" />
        <Cell><SelLocIcon /></Cell><Drop w="w-[10px]" />
        <Handle w="w-[16px]" />
        <Cell><IdentifyIcon /></Cell><Cell><AbacusIcon /></Cell><Cell><GearIcon /></Cell><Cell><SigmaIcon /></Cell>
        <Cell><TableIcon /></Cell><Drop w="w-[12px]" />
        <Cell><MeasureIcon /></Cell><Drop w="w-[12px]" />
        <Cell><TipIcon /></Cell>
        <Cell><GearOffIcon /></Cell><Drop w="w-[12px]" off />
      </div>

      {/* toolbar 2 */}
      <div className="h-[40px] shrink-0 flex items-center bg-linear-to-b from-[#f9f9f9] to-[#efefef] border-b-2 border-[#bdbdbd]">
        <Handle w="w-[12px]" />
        <Cell><DsMgrIcon /></Cell><Cell><GpkgIcon /></Cell><Cell><TopoIcon /></Cell><Cell><FeatherIcon /></Cell><Cell><ChipIcon /></Cell><Cell><MeshIcon /></Cell><Cell><VmeshIcon /></Cell>
        <Handle w="w-[18px]" />
        <Cell><PencilsOff /></Cell><Cell><PencilIcon /></Cell><Cell><SaveOff /></Cell>
        <Cell><NodeOff /></Cell><Drop w="w-[15px]" off />
        <Cell><BlobOff /></Cell>
        <Cell><ToolsOff /></Cell><Drop w="w-[9px]" off />
        <Cell><RowsOff /></Cell><Cell><TrashOff /></Cell><Cell><CutOff /></Cell><Cell><CopyOff /></Cell><Cell><PasteOff /></Cell><Cell><UndoOff /></Cell><Cell><UndoOff flip /></Cell>
        <Handle w="w-[14px]" />
        <Cell><AbcTag color="#f5d742" line="#a88e10" bg="#222" /></Cell>
        <Cell><DiagramIcon /></Cell>
        <Sep />
        <Cell><PinTag /></Cell>
        <Cell><AbcTag color="#e8303a" line="#e0202a" bg="#fff" /></Cell>
        <Sep />
        <Cell><PinTag off /></Cell><Cell><OffTag kind={0} /></Cell><Cell><OffTag kind={1} /></Cell><Cell><OffTag kind={2} /></Cell><Cell><OffTag kind={3} /></Cell>
        <Handle w="w-[16px]" />
        <Cell><BinocIcon /></Cell>
        <Handle w="w-[16px]" />
        <Cell><PythonIcon /></Cell>
        <Handle w="w-[16px]" />
        <Cell><HelpIcon /></Cell>
        <Handle w="w-[20px]" />
      </div>

      {/* main */}
      <div className="h-[882px] shrink-0 flex">
        <div className="w-[300px] shrink-0 flex flex-col pr-[6px]">
          <DockHeader title="Browser" />
          <div className="h-[30px] flex items-center pl-[8px] gap-[9px]">
            <svg width="16" height="16" viewBox="0 0 16 16"><rect x="1.500" y="1.500" width="11" height="11" fill="none" stroke="#777" /><rect x="9" y="9" width="6" height="6" fill="#6f9a62" stroke="#e8f0e4" /></svg>
            <RefreshIcon size={16} />
            <svg width="16" height="16" viewBox="0 0 16 16"><path d="M1 1h14L10 8v7l-4-2V8z" fill="#7ea2cc" stroke="#4d76a9" /><rect x="1" y="1" width="14" height="3" fill="#e8c03a" /></svg>
            <svg width="16" height="16" viewBox="0 0 16 16"><path d="M1 3h6M3 3v11h4M3 8h4" stroke="#888" fill="none" /><rect x="6" y="6" width="3" height="3" fill="#f0a030" /><rect x="6" y="12" width="3" height="3" fill="#f0a030" /><path d="M11.500 15V6H9l3.500-5L16 6h-2.500v9z" fill="#4f7fb5" /></svg>
            <svg width="16" height="16" viewBox="0 0 16 16"><circle cx="8" cy="8" r="7" fill="#6b93bf" /><text x="6" y="12" fontSize="11" fontStyle="italic" fontWeight="700" fill="#fff" fontFamily="Liberation Serif">i</text></svg>
          </div>
          <div className="h-[373px] bg-white border border-[#b9b9b9] pt-[1px] overflow-hidden">
            {browserItems.map(([label, arrow, icon]) => (
              <BrowserRow key={label} label={label} arrow={arrow} icon={icon} />
            ))}
          </div>
          <div className="h-[7px] flex justify-center items-center gap-[2px]">
            {[0, 1, 2, 3, 4, 5].map((i) => <div key={i} className="w-px h-px bg-[#a8a8a8]" />)}
          </div>
          <DockHeader title="Layers" />
          <div className="h-[30px] pb-[3px] flex items-center pl-[8px] gap-[9px]">
            <svg width="16" height="16" viewBox="0 0 16 16"><path d="M1 9l5-3 3 4-4 3z" fill="#c8502e" /><path d="M3 11l4-3 2 3-3 3z" fill="#5d84b2" /><path d="M8 7l7-6" stroke="#c89a20" strokeWidth="2.500" /></svg>
            <svg width="16" height="16" viewBox="0 0 16 16"><rect x="1.500" y="5" width="8" height="9" fill="#eee" stroke="#888" /><rect x="5" y="1.500" width="6" height="11" fill="#eee" stroke="#888" /><rect x="10" y="10" width="5.500" height="5.500" fill="#6f9a62" /></svg>
            <svg width="19" height="16" viewBox="0 0 19 16" className="-mr-[3px]"><path d="M1 7c4-5 10-5 14 0-4 5-10 5-14 0z" fill="#dfe8f2" stroke="#999" /><circle cx="8" cy="7" r="3.500" fill="#4f7fb5" /><path d="M14 13h5l-2.500 3z" fill="#555" /></svg>
            <svg width="19" height="16" viewBox="0 0 19 16" className="-mr-[3px]"><path d="M1 1h14L10 8v7l-4-2V8z" fill="#6b93bf" stroke="#3f648f" /><rect x="1" y="1" width="14" height="3" fill="#e8c03a" /><path d="M14 13h5l-2.500 3z" fill="#555" /></svg>
            <div className="flex items-center gap-[1px]">
              <svg width="18" height="16" viewBox="0 0 18 16"><text x="0" y="12" fontSize="15" fill="#6a4a8a" fontFamily="Liberation Serif">ε</text><path d="M9 9h7v6H9z" fill="#bbb" stroke="#888" /></svg>
              <div className="w-0 h-0 border-x-[4px] border-x-transparent border-t-[5px] border-t-[#555]" />
            </div>
            <svg width="16" height="16" viewBox="0 0 16 16"><path d="M1 3h6M3 3v11h4M3 8h4" stroke="#888" fill="none" /><rect x="6" y="6" width="3" height="3" fill="#f0a030" /><rect x="6" y="12" width="3" height="3" fill="#f0a030" /><path d="M11.500 1v9H9l3.500 5L16 10h-2.500V1z" fill="#4f7fb5" /></svg>
            <svg width="16" height="16" viewBox="0 0 16 16"><path d="M1 3h6M3 3v11h4M3 8h4" stroke="#888" fill="none" /><rect x="6" y="6" width="3" height="3" fill="#f0a030" /><rect x="6" y="12" width="3" height="3" fill="#f0a030" /><path d="M11.500 15V6H9l3.500-5L16 6h-2.500v9z" fill="#4f7fb5" /></svg>
            <svg width="16" height="16" viewBox="0 0 16 16"><rect x="1.500" y="1.500" width="11" height="11" fill="none" stroke="#777" /><rect x="8" y="9" width="7" height="6" rx="1" fill="#e04848" /><path d="M9.500 12h4" stroke="#fff" /></svg>
          </div>
          <div className="flex-1 bg-white border border-[#b9b9b9] flex flex-col overflow-hidden">
            <div className="flex-1 overflow-hidden">
              {layers.map((layer, i) => <LayerRow key={i} layer={layer} />)}
            </div>
            <div className="h-[14px] flex items-center bg-[#e4e4e4] border-t border-[#c8c8c8]">
              <div className="w-[14px] h-full bg-[#efefef] border-r border-[#c8c8c8] flex items-center justify-center">
                <div className="w-0 h-0 border-y-[4px] border-y-transparent border-r-[4px] border-r-[#444]" />
              </div>
              <div className="w-[200px] h-full bg-[#f4f4f4] border-r border-[#c8c8c8]" />
              <div className="flex-1" />
              <div className="w-[14px] h-full bg-[#efefef] border-l border-[#c8c8c8] flex items-center justify-center">
                <div className="w-0 h-0 border-y-[4px] border-y-transparent border-l-[4px] border-l-[#444]" />
              </div>
            </div>
          </div>
        </div>

        <div className="flex-1 flex flex-col min-w-0">
          <div className="h-[31px] shrink-0 bg-[#ffc800] border-b border-[#e6b400] border-l border-l-[#bdbdbd] flex items-center text-[11px]">
            <div className="w-[42px] flex justify-center">
              <svg width="24" height="22" viewBox="0 0 24 22"><path d="M12 2l10.500 18.500h-21z" fill="none" stroke="#b8341a" strokeWidth="1.600" strokeLinejoin="round" /><path d="M12 8v6.500" stroke="#b8341a" strokeWidth="1.800" /><circle cx="12" cy="17" r="1.100" fill="#b8341a" /></svg>
            </div>
            <span className="text-black">Open Sans font installation failed</span>
            <div className="ml-auto w-[79px] h-[20px] bg-linear-to-b from-[#fdfdfd] to-[#e9e9e9] border border-[#c8c8c8] rounded-[2px] flex items-center justify-center text-black">View Error</div>
            <div className="ml-[31px] mr-[23px] w-[18px] h-[18px] rounded-full bg-[#3d3000] flex items-center justify-center">
              <svg width="10" height="10" viewBox="0 0 10 10"><path d="M1.500 1.500l7 7M8.500 1.500l-7 7" stroke="#fff" strokeWidth="2.400" /></svg>
            </div>
          </div>
          <div className="flex-1 border-l border-r border-b border-[#bdbdbd] bg-white overflow-hidden">
            <svg width="1618" height="851" viewBox="301 152 1618 851" className="block">
              <polygon points={yellowShape} fill="#e4b336" stroke="#333" strokeWidth="1" />
              <polygon points={redShape} fill="#d40000" stroke="#333" strokeWidth="1" />
            </svg>
          </div>
        </div>
      </div>

      {/* status */}
      <div className="h-[29px] shrink-0 flex items-center text-black text-[11px]">
        <div className="ml-[5px] w-[198px] h-[21px] bg-white border border-[#b4b4b4] rounded-[3px] flex items-center pl-[6px] gap-[6px] text-[#777]">
          <Search size={14} strokeWidth={1.5} color="#777" />
          <span>Type to locate (Ctrl+K)</span>
        </div>
        <span className="ml-[8px]">Toggles the editing state of the current layer</span>
        <div className="ml-auto w-[798px] flex items-center">
          <span className="w-[57px] shrink-0">Coordinate</span>
          <div className={`${fieldClass} w-[93px] justify-center`}>676921, 746759</div>
          <div className="w-[32px] flex justify-center shrink-0">
            <svg width="18" height="18" viewBox="0 0 18 18"><circle cx="8" cy="8" r="6" fill="#ddd" stroke="#333" strokeDasharray="2 1.500" strokeWidth="1.500" /><path d="M3 2l12 14" stroke="#333" strokeWidth="1.500" /><path d="M6 13l6 3" stroke="#333" strokeWidth="1.500" /></svg>
          </div>
          <span className="w-[29px] shrink-0">Scale</span>
          <div className={`${fieldClass} w-[80px] pl-[4px]`}>
            1:91366
            <div className="ml-auto w-[20px] h-full border-l border-[#d4d4d4] flex items-center justify-center">
              <div className="w-0 h-0 border-x-[4px] border-x-transparent border-t-[5px] border-t-[#666]" />
            </div>
          </div>
          <div className="w-[33px] flex justify-center shrink-0">
            <svg width="14" height="18" viewBox="0 0 14 18"><path d="M3.500 8V5a3.500 3.500 0 0 1 7 0v3" fill="none" stroke="#8a8a8a" strokeWidth="1.500" /><rect x="1" y="8" width="12" height="9" rx="1" fill="#7d7d7d" /></svg>
          </div>
          <span className="w-[48px] shrink-0">Magnifier</span>
          <div className={`${fieldClass} w-[83px] pl-[5px]`}>100%<Spin /></div>
          <span className="w-[60px] pl-[9px] shrink-0">Rotation</span>
          <div className={`${fieldClass} w-[83px] pl-[4px]`}>0.0 °<Spin /></div>
          <div className="ml-[8px]"><CheckBox checked /></div>
          <span className="ml-[4px] w-[49px] shrink-0">Render</span>
          <div className="w-[18px] shrink-0">
            <svg width="16" height="16" viewBox="0 0 16 16"><circle cx="8" cy="8" r="6.500" fill="#d8d8d8" stroke="#777" /><path d="M1.500 8h13M8 1.500v13M3 4h10M3 12h10" stroke="#777" strokeWidth=".7" /><ellipse cx="8" cy="8" rx="3" ry="6.500" fill="none" stroke="#777" strokeWidth=".7" /></svg>
          </div>
          <span className="shrink-0">EPSG:32631</span>
          <div className="ml-auto mr-[6px]">
            <svg width="20" height="20" viewBox="0 0 20 20"><path d="M10 2c5 0 8 3 8 7s-3 7-8 7l-4 3v-4c-2-1-4-3-4-6 0-4 3-7 8-7z" fill="#5f6f6f" /><circle cx="6.500" cy="9" r="1" fill="#fff" /><circle cx="10" cy="9" r="1" fill="#fff" /><circle cx="13.500" cy="9" r="1" fill="#fff" /></svg>
          </div>
        </div>
      </div>

      {/* taskbar */}
      <div className="h-[48px] shrink-0 bg-[#1c1c1c] flex items-center text-white">
        <div className="ml-[16px] w-[24px] h-[23px] bg-[#0a66c8] flex p-[2px] gap-[2px] shrink-0">
          <div className="w-[10px] h-full bg-white" />
          <div className="flex-1 flex flex-col gap-[1px]">
            <div className="flex-1 bg-[#9fd4f8]" />
            <div className="flex-1 bg-[#3f9ee8]" />
            <div className="flex-1 bg-[#1a7ad4]" />
          </div>
        </div>
        <div className="ml-[500px] w-[44px] flex justify-center shrink-0">
          <div className="grid grid-cols-2 gap-[2px]">
            <div className="w-[11px] h-[11px] bg-[#4cc2ff]" /><div className="w-[11px] h-[11px] bg-[#7fd6ff]" />
            <div className="w-[11px] h-[11px] bg-[#1fb0f2]" /><div className="w-[11px] h-[11px] bg-[#4cc2ff]" />
          </div>
        </div>
        <div className="ml-[3px] w-[218px] h-[32px] rounded-full bg-[#3a3a3a] flex items-center pl-[11px] text-[13px] text-[#d8d8d8] shrink-0 overflow-hidden">
          <Search size={18} strokeWidth={1.8} color="#e8e8e8" className="-scale-x-100" />
          <span className="ml-[8px] font-['Noto_Sans',sans-serif]">Search</span>
          <svg width="56" height="32" viewBox="0 0 56 32" className="ml-auto">
            <path d="M5 32c1-6 6-8 12-8s11 2 12 8z" fill="#5a2f22" />
            <ellipse cx="17" cy="12" rx="6" ry="9" fill="#c9a288" />
            <path d="M12 15c2 3 8 3 10 0l-2 13h-6z" fill="#c8c8c8" />
            <path d="M11 8c2-6 10-6 12 0-3-2-9-2-12 0z" fill="#aaa" />
            <path d="M30 20h10M35 14h2v12h-2zM44 10h3v14h-3zM30 25h22v3H30z" fill="#a8843a" />
          </svg>
        </div>
        <div className="ml-[4px] flex shrink-0">
          <TaskCell>
            <div className="relative w-[24px] h-[20px]">
              <div className="absolute right-0 top-0 w-[17px] h-[17px] bg-[#f2f2f2] rounded-[2px]" />
              <div className="absolute left-0 bottom-0 w-[17px] h-[13px] bg-[#8a8a8a]/70 rounded-[2px]" />
            </div>
          </TaskCell>
          <TaskCell>
            <svg width="24" height="24" viewBox="0 0 24 24"><path d="M12 1a11 11 0 0 1 0 22H3l1.500-4A11 11 0 0 1 12 1z" fill="#7b83eb" /><rect x="6" y="8" width="8" height="8" rx="1.500" fill="#fff" /><path d="M15 11l4-2.500v7L15 13z" fill="#fff" /></svg>
          </TaskCell>
          <TaskCell dot>
            <svg width="28" height="28" viewBox="0 0 28 28" className="translate-x-[2px]"><circle cx="12" cy="16" r="12" fill="#dd4b3e" /><path d="M12 16L1.600 10a12 12 0 0 0 10.400 18z" fill="#2fa54a" /><path d="M12 16l10.400-6A12 12 0 0 1 12 28z" fill="#fbc02d" /><circle cx="12" cy="16" r="5.500" fill="#fff" /><circle cx="12" cy="16" r="4.200" fill="#4285f4" /><circle cx="21" cy="7" r="6.500" fill="#b98a76" /><path d="M18 5c2-2 5-1 6 1s-1 4-3 4-4-3-3-5z" fill="#7a4a3a" /></svg>
          </TaskCell>
          <TaskCell>
            <svg width="24" height="24" viewBox="0 0 24 24"><circle cx="12" cy="12" r="11.500" fill="#1283d0" /><path d="M12 .5A11.500 11.500 0 0 1 23.500 12c0 3-3 5-6 5-2 0-4-1-4-2 3 0 5-1 5-4 0-4-3-6.500-7-6.500-3 0-6 1-9.500 5A11.500 11.500 0 0 1 12 .5z" fill="#2ec4b6" /><path d="M23.500 13c-1 5-5 9-9 10-3 0-5-2-5-5 0-3 2-5 4-5 0 2 2 4 5 4s4-2 5-4z" fill="#46d17c" /><path d="M9 18c0-4 2-7 5-7-2 2-3 4-2 6s2 4 4 5c-4 1-7-1-7-4z" fill="#0c3f7a" /></svg>
          </TaskCell>
          <TaskCell dot>
            <svg width="25" height="24" viewBox="0 0 25 24"><path d="M1 3h9l2 3h12v17H1z" fill="#e8b62c" /><path d="M1 8h23v15H1z" fill="#f8d64e" /><rect x="8" y="15" width="10" height="7" rx="1" fill="#1a7ad4" /></svg>
          </TaskCell>
          <TaskCell>
            <div className="relative w-[24px] h-[24px] bg-[#f4f4f4] rounded-[4px] grid grid-cols-2 gap-px content-center justify-center px-[6px] pt-[4px]">
              <div className="w-[5px] h-[5px] bg-[#e8532a]" /><div className="w-[5px] h-[5px] bg-[#7fba00]" />
              <div className="w-[5px] h-[5px] bg-[#1f9ee8]" /><div className="w-[5px] h-[5px] bg-[#ffb900]" />
            </div>
          </TaskCell>
          <TaskCell>
            <svg width="24" height="18" viewBox="0 0 24 18"><rect width="24" height="18" rx="4" fill="#f00" /><path d="M9.500 5l6.500 4-6.500 4z" fill="#fff" /></svg>
          </TaskCell>
          <TaskCell dot>
            <svg width="22" height="24" viewBox="0 0 22 24"><rect width="22" height="24" rx="3" fill="#fff" /><path d="M5 19l5-5 1-4 2 2 1-6 3-2-2 15-3-3-2 3z" fill="#111" /></svg>
          </TaskCell>
          <TaskCell dot>
            <svg width="24" height="24" viewBox="0 0 24 24"><circle cx="12" cy="12" r="12" fill="#3a2468" /><circle cx="12" cy="12" r="8" fill="none" stroke="#f0a830" strokeWidth="1.300" /><path d="M8 9h8M10 9v7M14 9v7" stroke="#f0a830" strokeWidth="1.500" /></svg>
          </TaskCell>
          <TaskCell dot><FaSpotify size={24} color="#1ed760" /></TaskCell>
          <TaskCell dot>
            <FaWhatsapp size={25} color="#25d366" />
            <div className="absolute -top-[5px] left-[7px] w-[28px] h-[16px] rounded-full bg-[#d9a9c0] text-[#222] text-[12px] flex items-center justify-center">99+</div>
          </TaskCell>
          <TaskCell dot>
            <svg width="24" height="26" viewBox="0 0 24 26"><path d="M12 2c2 3 5 2 7 6 3 1 4 5 4 7A11 11 0 0 1 1 15C1 11 3 8 5 6c0 2 1 3 2 3 0-3 2-5 5-7z" fill="#ff8a16" /><path d="M2 14a10 10 0 0 0 20 2c-3 5-10 6-14 2s-3-6-6-4z" fill="#e0245e" /><circle cx="12" cy="14" r="5.500" fill="#6a3dd0" /></svg>
          </TaskCell>
          <TaskCell active><QgisLogo size={26} /></TaskCell>
        </div>
        <div className="ml-auto pr-[17px] flex items-center shrink-0">
          <div className="w-[25px] flex justify-center"><ChevronUp size={17} color="#fff" /></div>
          <div className="w-[25px] flex justify-center">
            <svg width="18" height="18" viewBox="0 0 18 18"><path d="M3 13a4 4 0 0 1 1-8 5 5 0 0 1 9 1 4 4 0 0 1 1 7z" fill="#8a8a8a" /><circle cx="12" cy="13" r="4.500" fill="#d8d8d8" /><path d="M11 11v4M13 11v4" stroke="#333" /></svg>
          </div>
          <div className="w-[24px] flex justify-center">
            <svg width="18" height="20" viewBox="0 0 18 20"><path d="M3 9a6 6 0 0 1 10-4M15 11a6 6 0 0 1-10 4" fill="none" stroke="#fff" strokeWidth="1.300" /><path d="M13 1v4h-4" fill="none" stroke="#fff" strokeWidth="1.300" /><circle cx="12" cy="15" r="3.500" fill="#e81123" /></svg>
          </div>
          <div className="w-[25px] flex justify-center"><Wifi size={17} color="#fff" /></div>
          <div className="w-[25px] flex justify-center"><Volume2 size={17} color="#fff" /></div>
          <div className="w-[25px] flex justify-center">
            <svg width="18" height="16" viewBox="0 0 18 16"><rect x="3" y="3" width="13" height="10" rx="2" fill="none" stroke="#fff" strokeWidth="1.200" /><rect x="5" y="5" width="6" height="6" fill="#fff" /><path d="M1 6v4" stroke="#fff" /></svg>
          </div>
          <div className="ml-[13px] w-[49px] flex flex-col items-end gap-[5px] text-[12.5px] text-[#eee]">
            <span>9:42 AM</span>
            <span>3/8/2025</span>
          </div>
          <div className="ml-[5px] w-[20px] h-[20px] rounded-full bg-[#d9a9c0] text-[#222] text-[12px] flex items-center justify-center">11</div>
        </div>
      </div>
    </div>
  );
}
